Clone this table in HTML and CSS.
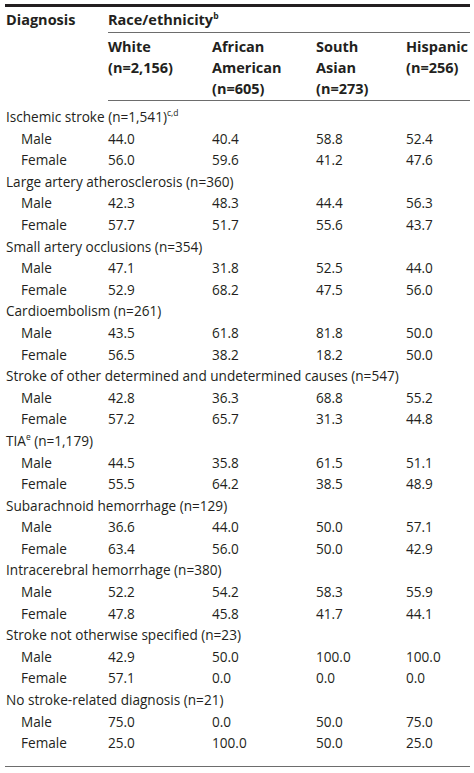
FILE: index.html
```html
<!DOCTYPE html>
<html>
<head>
<meta charset="utf-8">
<link rel="stylesheet" href="styles.css">
</head>
<body>
<table class="t">
  <colgroup>
    <col class="c1"><col class="c2"><col class="c3"><col class="c4"><col class="c5">
  </colgroup>
  <thead>
    <tr class="h1">
      <th rowspan="2" class="diag">Diagnosis</th>
      <th colspan="4" class="race">Race/ethnicity<sup>b</sup></th>
    </tr>
    <tr class="h2">
      <th>White<br>(n=2,156)</th>
      <th>African<br>American<br>(n=605)</th>
      <th>South<br>Asian<br>(n=273)</th>
      <th>Hispanic<br>(n=256)</th>
    </tr>
  </thead>
  <tbody>
    <tr class="grp first"><td colspan="5">Ischemic stroke (n=1,541)<sup>c,d</sup></td></tr>
    <tr><td class="sex">Male</td><td>44.0</td><td>40.4</td><td>58.8</td><td>52.4</td></tr>
    <tr><td class="sex">Female</td><td>56.0</td><td>59.6</td><td>41.2</td><td>47.6</td></tr>
    <tr class="grp"><td colspan="5">Large artery atherosclerosis (n=360)</td></tr>
    <tr><td class="sex">Male</td><td>42.3</td><td>48.3</td><td>44.4</td><td>56.3</td></tr>
    <tr><td class="sex">Female</td><td>57.7</td><td>51.7</td><td>55.6</td><td>43.7</td></tr>
    <tr class="grp"><td colspan="5">Small artery occlusions (n=354)</td></tr>
    <tr><td class="sex">Male</td><td>47.1</td><td>31.8</td><td>52.5</td><td>44.0</td></tr>
    <tr><td class="sex">Female</td><td>52.9</td><td>68.2</td><td>47.5</td><td>56.0</td></tr>
    <tr class="grp"><td colspan="5">Cardioembolism (n=261)</td></tr>
    <tr><td class="sex">Male</td><td>43.5</td><td>61.8</td><td>81.8</td><td>50.0</td></tr>
    <tr><td class="sex">Female</td><td>56.5</td><td>38.2</td><td>18.2</td><td>50.0</td></tr>
    <tr class="grp"><td colspan="5">Stroke of other determined and undetermined causes (n=547)</td></tr>
    <tr><td class="sex">Male</td><td>42.8</td><td>36.3</td><td>68.8</td><td>55.2</td></tr>
    <tr><td class="sex">Female</td><td>57.2</td><td>65.7</td><td>31.3</td><td>44.8</td></tr>
    <tr class="grp"><td colspan="5">TIA<sup>e</sup> (n=1,179)</td></tr>
    <tr><td class="sex">Male</td><td>44.5</td><td>35.8</td><td>61.5</td><td>51.1</td></tr>
    <tr><td class="sex">Female</td><td>55.5</td><td>64.2</td><td>38.5</td><td>48.9</td></tr>
    <tr class="grp"><td colspan="5">Subarachnoid hemorrhage (n=129)</td></tr>
    <tr><td class="sex">Male</td><td>36.6</td><td>44.0</td><td>50.0</td><td>57.1</td></tr>
    <tr><td class="sex">Female</td><td>63.4</td><td>56.0</td><td>50.0</td><td>42.9</td></tr>
    <tr class="grp"><td colspan="5">Intracerebral hemorrhage (n=380)</td></tr>
    <tr><td class="sex">Male</td><td>52.2</td><td>54.2</td><td>58.3</td><td>55.9</td></tr>
    <tr><td class="sex">Female</td><td>47.8</td><td>45.8</td><td>41.7</td><td>44.1</td></tr>
    <tr class="grp"><td colspan="5">Stroke not otherwise specified (n=23)</td></tr>
    <tr><td class="sex">Male</td><td>42.9</td><td>50.0</td><td>100.0</td><td>100.0</td></tr>
    <tr><td class="sex">Female</td><td>57.1</td><td>0.0</td><td>0.0</td><td>0.0</td></tr>
    <tr class="grp"><td colspan="5">No stroke-related diagnosis (n=21)</td></tr>
    <tr><td class="sex">Male</td><td>75.0</td><td>0.0</td><td>50.0</td><td>75.0</td></tr>
    <tr class="last"><td class="sex">Female</td><td>25.0</td><td>100.0</td><td>50.0</td><td>25.0</td></tr>
  </tbody>
</table>
</body>
</html>
```

FILE: styles.css
```css
html, body {
  margin: 0;
  padding: 0;
  background: #ffffff;
}
body {
  padding: 4px 4px 0 5px;
  font-family: "Open Sans", "Noto Sans", sans-serif;
  font-size: 13.6px;
  color: #231f20;
}
.t {
  width: 465px;
  border-collapse: collapse;
  table-layout: fixed;
  border-top: 3px solid #231f20;
  border-bottom: 1px solid #6d6d6d;
}
.c1 { width: 103px; }
.c2 { width: 104px; }
.c3 { width: 104px; }
.c4 { width: 90px; }
.c5 { width: 64px; }
th, td {
  padding: 0;
  text-align: left;
  vertical-align: top;
  white-space: nowrap;
}
th {
  font-weight: 700;
  font-size: 14.5px;
  line-height: 21px;
}
.h1 th {
  height: 25px;
  vertical-align: middle;
}
.diag { padding-left: 1px; vertical-align: top !important; padding-top: 2px; }
.race {
  border-bottom: 1px solid #6d6d6d;
}
.h2 th {
  padding-top: 3px;
  padding-bottom: 1px;
  border-bottom: 1px solid #6d6d6d;
}
td {
  height: 21.6px;
  line-height: 21.6px;
}
.grp td { padding-left: 1px; }
.sex { padding-left: 16px !important; }
.first td { padding-top: 5px; }
.last td { padding-bottom: 12px; }
sup {
  font-size: 8.5px;
  font-weight: 400;
  line-height: 0;
  vertical-align: 6px;
}
.race sup { font-weight: 700; }
```
